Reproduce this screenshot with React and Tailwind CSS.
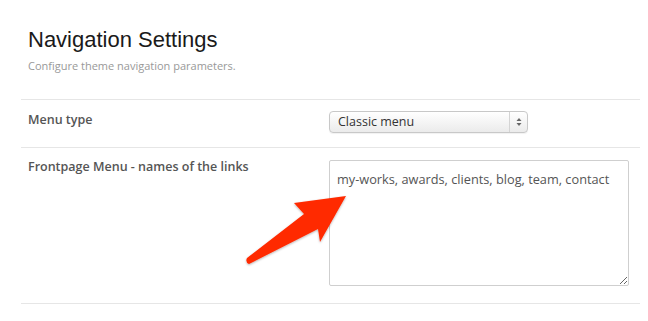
import React from 'react';

const App = () => {
  return (
    <div className="relative w-[648px] h-[321px] bg-white overflow-hidden font-['Open_Sans',sans-serif]">
      <div className="pl-[21px] pr-[8px] pt-[27px]">
        {/* Header */}
        <div className="pl-[7px]">
          <h1 className="font-['Liberation_Sans',Arial,sans-serif] text-[22px] leading-[26px] text-[#1a1a1a]">
            Navigation Settings
          </h1>
          <p className="mt-[5px] text-[11px] leading-[16px] text-[#999]">
            Configure theme navigation parameters.
          </p>
        </div>

        {/* Menu type */}
        <div className="mt-[25px] border-t border-[#e6e6e6] flex pt-[10px] pb-[14px]">
          <div className="w-[308px] pl-[7px] text-[12.5px] leading-[20px] font-semibold text-[#555]">Menu type</div>
          <div className="mt-[1px] w-[199px] h-[22px] flex items-stretch rounded-[4px] border border-[#c8c8c8] bg-gradient-to-b from-white to-[#ebebeb] shadow-[0_1px_1px_rgba(0,0,0,0.06)]">
            <div className="flex-1 pl-[8px] text-[12.5px] leading-[20px] text-[#333]">Classic menu</div>
            <div className="w-[18px] border-l border-[#d4d4d4] flex items-center justify-center">
              <svg width="6" height="10" viewBox="0 0 6 10">
                <path d="M3 1 L5.5 4 L0.5 4 Z" fill="#666" />
                <path d="M3 9 L5.5 6 L0.5 6 Z" fill="#666" />
              </svg>
            </div>
          </div>
        </div>

        {/* Frontpage menu */}
        <div className="border-t border-[#e6e6e6] flex pt-[9px] pb-[17px]">
          <div className="w-[308px] pl-[7px] text-[12.5px] leading-[20px] font-semibold text-[#555]">
            Frontpage Menu - names of the links
          </div>
          <textarea
            readOnly
            defaultValue="my-works, awards, clients, blog, team, contact"
            className="mt-[3px] w-[300px] h-[126px] border border-[#cfcfcf] rounded-[2px] px-[7px] py-[8px] text-[12.75px] leading-[20px] text-[#555] font-['Open_Sans',sans-serif] outline-none resize"
          />
        </div>
        <div className="border-t border-[#e6e6e6]" />
      </div>

      {/* Annotation arrow */}
      <svg className="absolute left-0 top-0 pointer-events-none" width="648" height="321" viewBox="0 0 648 321">
        <defs>
          <filter id="sh" x="-20%" y="-20%" width="140%" height="140%">
            <feDropShadow dx="0" dy="1" stdDeviation="1.2" floodColor="#000" floodOpacity="0.3" />
          </filter>
        </defs>
        <path
          d="M346 196 L294 203 L304 214 L247 258 Q245 262 249 264 L318 229 L320 242 Z"
          fill="#ff2a00"
          filter="url(#sh)"
        />
      </svg>
    </div>
  );
};

export default App;
